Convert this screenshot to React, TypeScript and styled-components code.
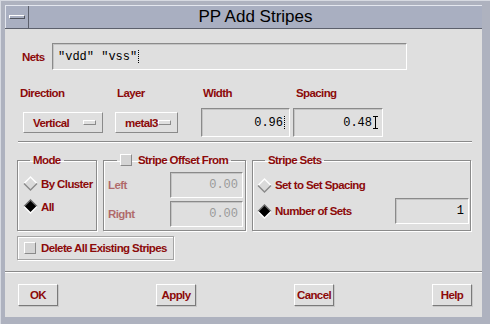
import React from 'react';
import styled, { createGlobalStyle } from 'styled-components';

const RED = '#8c0a0a';
const BG = '#dfdfdf';
const SHADOW = '#8a8a8a';
const LIGHT = '#ffffff';
const LABEL_FONT = `"Liberation Sans", Arial, sans-serif`;
const MONO = `"Liberation Mono", "Courier New", monospace`;

const GlobalStyle = createGlobalStyle`
  html, body {
    margin: 0;
    padding: 0;
    background: #aeb2bf;
  }
  * {
    box-sizing: border-box;
  }
`;

const Window = styled.div`
  width: 490px;
  height: 324px;
  display: flex;
  flex-direction: column;
  padding: 4px 8px 7px 4px;
  background: #aeb2bf;
  border-top: 1px solid #d6d9e1;
  border-left: 1px solid #d6d9e1;
`;

const TitleBar = styled.div`
  height: 24px;
  display: flex;
  background: #a9afc1;
  border-top: 1px solid #e3e6ee;
  border-bottom: 1px solid #5c606c;
`;

const MenuButton = styled.div`
  width: 24px;
  display: flex;
  align-items: center;
  justify-content: center;
  border-right: 1px solid #5c606c;
  border-left: 1px solid #e3e6ee;
`;

const MenuBar = styled.div`
  width: 16px;
  height: 4px;
  background: #a9afc1;
  border-top: 1px solid #fff;
  border-left: 1px solid #fff;
  border-bottom: 1px solid #50545e;
  border-right: 1px solid #50545e;
`;

const Title = styled.div`
  flex: 1;
  display: flex;
  align-items: center;
  justify-content: center;
  font: 17px "Liberation Sans", Arial, sans-serif;
  color: #000;
`;

const Body = styled.div`
  flex: 1;
  min-height: 0;
  display: flex;
  flex-direction: column;
  background: ${BG};
`;

const Label = styled.span<{ $disabled?: boolean; $w?: number }>`
  font: bold 11.5px ${LABEL_FONT};
  letter-spacing: -0.6px;
  line-height: 14px;
  color: ${RED};
  opacity: ${({ $disabled }) => ($disabled ? 0.55 : 1)};
  width: ${({ $w }) => ($w ? `${$w}px` : 'auto')};
  white-space: nowrap;
`;

const NetsRow = styled.div`
  display: flex;
  align-items: center;
  margin-top: 14px;
  padding-left: 17px;
`;

const TextField = styled.div<{ $w: number; $h: number; $right?: boolean; $disabled?: boolean }>`
  width: ${({ $w }) => $w}px;
  height: ${({ $h }) => $h}px;
  display: flex;
  align-items: center;
  justify-content: ${({ $right }) => ($right ? 'flex-end' : 'flex-start')};
  padding: 0 4px 0 5px;
  border-top: 1px solid ${SHADOW};
  border-left: 1px solid ${SHADOW};
  border-bottom: 1px solid ${LIGHT};
  border-right: 1px solid ${LIGHT};
  box-shadow: inset 1px 1px 0 #c4c4c4;
  font: 12px ${MONO};
  color: ${({ $disabled }) => ($disabled ? '#9a9a9a' : '#000')};
  white-space: pre;
`;

const Caret = styled.span<{ $beam?: boolean }>`
  display: inline-block;
  width: ${({ $beam }) => ($beam ? '5px' : '1px')};
  height: 13px;
  margin-left: 1px;
  ${({ $beam }) =>
    $beam
      ? `border-top: 1px solid #000; border-bottom: 1px solid #000;
         background: linear-gradient(#000, #000) center / 1px 100% no-repeat;`
      : `border-left: 1px dotted #000;`}
`;

const ParamGrid = styled.div`
  display: grid;
  grid-template-columns: 95px 86px 92px 90px;
  grid-template-rows: 14px 29px;
  row-gap: 8px;
  align-items: center;
  margin-top: 16px;
  padding-left: 15px;
`;

const GridLabel = styled(Label)<{ $pad: number }>`
  padding-left: ${({ $pad }) => $pad}px;
`;

const OptionMenu = styled.div<{ $w: number; $ml: number }>`
  width: ${({ $w }) => $w}px;
  height: 21px;
  margin-left: ${({ $ml }) => $ml}px;
  display: flex;
  align-items: center;
  justify-content: space-between;
  padding: 0 6px 0 9px;
  border-top: 1px solid ${LIGHT};
  border-left: 1px solid ${LIGHT};
  border-bottom: 1px solid ${SHADOW};
  border-right: 1px solid ${SHADOW};
`;

const Indicator = styled.span`
  width: 13px;
  height: 5px;
  border-top: 1px solid ${LIGHT};
  border-left: 1px solid ${LIGHT};
  border-bottom: 1px solid ${SHADOW};
  border-right: 1px solid ${SHADOW};
`;

const Separator = styled.div<{ $mt: number; $ml?: number; $mr?: number }>`
  height: 2px;
  margin: ${({ $mt, $ml = 0, $mr = 0 }) => `${$mt}px ${$mr}px 0 ${$ml}px`};
  border-top: 1px solid ${SHADOW};
  border-bottom: 1px solid ${LIGHT};
`;

const GroupRow = styled.div`
  display: flex;
  gap: 6px;
  margin-top: 10px;
  padding-left: 12px;
`;

const Group = styled.fieldset<{ $w: number }>`
  width: ${({ $w }) => $w}px;
  height: 78px;
  min-width: 0;
  margin: 0;
  padding: 0;
  border: 1px solid ${SHADOW};
  box-shadow: inset 1px 1px 0 ${LIGHT}, 1px 1px 0 ${LIGHT};
`;

const Legend = styled.legend<{ $ml: number }>`
  display: flex;
  align-items: center;
  gap: 6px;
  margin-left: ${({ $ml }) => $ml}px;
  padding: 0 3px;
  font: bold 11.5px ${LABEL_FONT};
  letter-spacing: -0.6px;
  line-height: 14px;
  color: ${RED};
  white-space: nowrap;
`;

const RadioList = styled.div<{ $pl: number; $pt: number; $pr?: number }>`
  display: flex;
  flex-direction: column;
  padding: ${({ $pt, $pl, $pr = 0 }) => `${$pt}px ${$pr}px 0 ${$pl}px`};
`;

const RadioRow = styled.div<{ $h: number }>`
  height: ${({ $h }) => $h}px;
  display: flex;
  align-items: center;
  gap: 3px;
`;

const Spacer = styled.div`
  flex: 1;
`;

const OffsetGrid = styled.div`
  display: grid;
  grid-template-columns: 62px 73px;
  grid-template-rows: 26px 26px;
  row-gap: 3px;
  align-items: center;
  padding: 5px 0 0 4px;
`;

const CheckBox = styled.span`
  display: inline-block;
  width: 12px;
  height: 12px;
  flex: none;
  background: #d4d4d4;
  border-top: 1px solid ${LIGHT};
  border-left: 1px solid ${LIGHT};
  border-bottom: 1px solid ${SHADOW};
  border-right: 1px solid ${SHADOW};
`;

const DeleteBox = styled.div`
  width: 157px;
  height: 24px;
  margin: 5px 0 0 12px;
  display: flex;
  align-items: center;
  gap: 5px;
  padding-left: 6px;
  border: 1px solid #a4a4a4;
  box-shadow: inset 1px 1px 0 ${LIGHT}, 1px 1px 0 ${LIGHT};
`;

const ButtonRow = styled.div`
  display: flex;
  justify-content: space-between;
  margin-top: 11px;
  padding: 0 10px 0 13px;
`;

const Button = styled.button`
  width: 40px;
  height: 22px;
  padding: 0;
  background: ${BG};
  border-top: 1px solid ${LIGHT};
  border-left: 1px solid ${LIGHT};
  border-bottom: 1px solid #7a7a7a;
  border-right: 1px solid #7a7a7a;
  box-shadow: 1px 1px 0 #c8c8c8;
  font: bold 11.5px ${LABEL_FONT};
  letter-spacing: -0.6px;
  color: ${RED};
`;

const Diamond: React.FC<{ on?: boolean }> = ({ on }) => (
  <svg width="15" height="15" viewBox="0 0 15 15">
    <polygon points="7.5,1 14,7.5 7.5,14 1,7.5" fill={on ? '#000' : '#dadada'} />
    <polyline
      points="1,7.5 7.5,1 14,7.5"
      fill="none"
      stroke={on ? '#6a6a6a' : '#ffffff'}
      strokeWidth="1.4"
    />
    <polyline
      points="1,7.5 7.5,14 14,7.5"
      fill="none"
      stroke={on ? '#ffffff' : '#8a8a8a'}
      strokeWidth="1.4"
    />
  </svg>
);

export default function App() {
  return (
    <>
      <GlobalStyle />
      <Window>
        <TitleBar>
          <MenuButton>
            <MenuBar />
          </MenuButton>
          <Title>PP Add Stripes</Title>
        </TitleBar>
        <Body>
          <NetsRow>
            <Label $w={30}>Nets</Label>
            <TextField $w={355} $h={27}>
              "vdd" "vss"<Caret />
            </TextField>
          </NetsRow>

          <ParamGrid>
            <GridLabel $pad={0}>Direction</GridLabel>
            <GridLabel $pad={2}>Layer</GridLabel>
            <GridLabel $pad={2}>Width</GridLabel>
            <GridLabel $pad={3}>Spacing</GridLabel>
            <OptionMenu $w={80} $ml={3}>
              <Label>Vertical</Label>
              <Indicator />
            </OptionMenu>
            <OptionMenu $w={63} $ml={0}>
              <Label>metal3</Label>
              <Indicator />
            </OptionMenu>
            <TextField $w={89} $h={29} $right>
              0.96<Caret />
            </TextField>
            <TextField $w={90} $h={29} $right>
              0.48<Caret $beam />
            </TextField>
          </ParamGrid>

          <Separator $mt={4} $ml={13} $mr={10} />

          <GroupRow>
            <Group $w={80}>
              <Legend $ml={12}>Mode</Legend>
              <RadioList $pl={5} $pt={5}>
                <RadioRow $h={23}>
                  <Diamond />
                  <Label>By Cluster</Label>
                </RadioRow>
                <RadioRow $h={23}>
                  <Diamond on />
                  <Label>All</Label>
                </RadioRow>
              </RadioList>
            </Group>

            <Group $w={143}>
              <Legend $ml={13}>
                <CheckBox />
                Stripe Offset From
              </Legend>
              <OffsetGrid>
                <Label $disabled>Left</Label>
                <TextField $w={73} $h={26} $right $disabled>
                  0.00
                </TextField>
                <Label $disabled>Right</Label>
                <TextField $w={73} $h={26} $right $disabled>
                  0.00
                </TextField>
              </OffsetGrid>
            </Group>

            <Group $w={219}>
              <Legend $ml={12}>Stripe Sets</Legend>
              <RadioList $pl={4} $pt={6} $pr={1}>
                <RadioRow $h={24}>
                  <Diamond />
                  <Label>Set to Set Spacing</Label>
                </RadioRow>
                <RadioRow $h={28}>
                  <Diamond on />
                  <Label>Number of Sets</Label>
                  <Spacer />
                  <TextField $w={74} $h={26} $right>
                    1
                  </TextField>
                </RadioRow>
              </RadioList>
            </Group>
          </GroupRow>

          <DeleteBox>
            <CheckBox />
            <Label>Delete All Existing Stripes</Label>
          </DeleteBox>

          <Separator $mt={11} />

          <ButtonRow>
            <Button>OK</Button>
            <Button>Apply</Button>
            <Button>Cancel</Button>
            <Button>Help</Button>
          </ButtonRow>
        </Body>
      </Window>
    </>
  );
}
